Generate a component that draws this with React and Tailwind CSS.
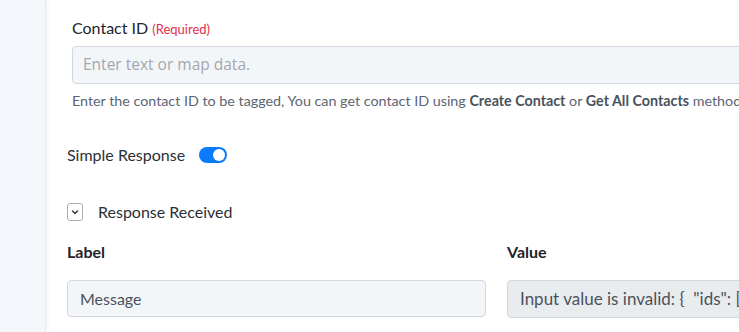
import React, { useState } from 'react';

const App = () => {
  const [simple, setSimple] = useState(true);

  return (
    <div className="w-[739px] h-[332px] flex overflow-hidden bg-white text-[#2b2f36]" style={{ fontFamily: 'Lato, "Open Sans", sans-serif' }}>
      <div className="w-[46px] shrink-0 bg-[#f3f6fa] border-r border-[#e6e9ee] shadow-[2px_0_4px_rgba(0,0,0,0.05)]" />

      <div className="flex-1 min-w-0 flex flex-col">
        <div className="pl-[26px] pt-[16px]">
          <div className="flex items-baseline gap-[4px] h-[20px]">
            <span className="text-[16px] text-[#1f2329]">Contact ID</span>
            <span className="text-[13px] text-[#e0314b]">(Required)</span>
          </div>
          <div className="mt-[10px] h-[38px] w-[700px] rounded-[4px] border border-[#d3d7dd] bg-[#f3f6f9] flex items-center px-[10px]">
            <span className="text-[15.5px] text-[#a3a7ad]" style={{ fontFamily: '"Open Sans", sans-serif' }}>Enter text or map data.</span>
          </div>
          <p className="mt-[6px] h-[20px] text-[14.3px] text-[#5c6572] whitespace-nowrap">
            Enter the contact ID to be tagged, You can get contact ID using <b className="text-[#4a525d]">Create Contact</b> or <b className="text-[#4a525d]">Get All Contacts</b> method
          </p>
        </div>

        <div className="pl-[21px] mt-[35px] h-[20px] flex items-center gap-[14px]">
          <span className="text-[16px] text-[#2b2f36]">Simple Response</span>
          <button
            onClick={() => setSimple(!simple)}
            className={`w-[28px] h-[16px] rounded-full flex items-center px-[2px] ${simple ? 'bg-[#0b7bfc] justify-end' : 'bg-gray-300 justify-start'}`}
          >
            <span className="w-[12px] h-[12px] rounded-full bg-white" />
          </button>
        </div>

        <div className="pl-[21px] mt-[37px] h-[20px] flex items-center gap-[15px]">
          <div className="w-[16px] h-[18px] rounded-[3px] border border-[#a9aeb6] flex items-center justify-center">
            <svg width="10" height="10" viewBox="0 0 10 10" fill="none" stroke="#3a4049" strokeWidth="1.6" strokeLinecap="round" strokeLinejoin="round">
              <path d="M2.5 4l2.5 2.5L7.5 4" />
            </svg>
          </div>
          <span className="text-[16px] text-[#2b2f36]">Response Received</span>
        </div>

        <div className="pl-[21px] mt-[20px] flex gap-[21px]">
          <div className="w-[419px] shrink-0">
            <div className="h-[20px] flex items-center text-[16px] font-bold text-[#1f2329]">Label</div>
            <div className="mt-[18px] h-[37px] rounded-[4px] border border-[#d3d7dd] bg-[#f3f6f9] flex items-center px-[12px]">
              <span className="text-[16px] text-[#4b525c]">Message</span>
            </div>
          </div>
          <div className="w-[260px] shrink-0">
            <div className="h-[20px] flex items-center text-[16px] font-bold text-[#1f2329]">Value</div>
            <div className="mt-[18px] h-[38px] rounded-[4px] border border-[#d3d7dd] bg-[#e9ecef] flex items-center px-[12px] overflow-hidden">
              <span className="text-[17px] text-[#4b525c] whitespace-pre">{'Input value is invalid: {  "ids": [ 123 ] }'}</span>
            </div>
          </div>
        </div>
      </div>
    </div>
  );
};

export default App;
